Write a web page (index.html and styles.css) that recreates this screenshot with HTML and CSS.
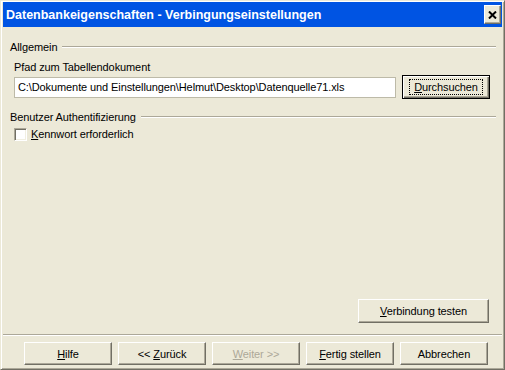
FILE: index.html
```html
<!DOCTYPE html>
<html lang="de">
<head>
    <meta charset="UTF-8">
    <title>Datenbankeigenschaften - Verbingungseinstellungen</title>
    <link rel="stylesheet" href="styles.css">
</head>
<body>
    <div class="window">
        <div class="titlebar">
            <span class="title">Datenbankeigenschaften - Verbingungseinstellungen</span>
            <div class="close-btn">
                <svg width="9" height="8" viewBox="0 0 9 8">
                    <path d="M1 0.5 L8 7.5 M8 0.5 L1 7.5" stroke="#000" stroke-width="2" fill="none"/>
                </svg>
            </div>
        </div>

        <div class="content">
            <div class="group-title">
                <span>Allgemein</span>
                <div class="rule"></div>
            </div>
            <div class="field-label">Pfad zum Tabellendokument</div>
            <div class="path-row">
                <div class="textbox">C:\Dokumente und Einstellungen\Helmut\Desktop\Datenquelle71.xls</div>
                <div class="btn btn-default"><span class="focus"><u>D</u>urchsuchen</span></div>
            </div>

            <div class="group-title second">
                <span>Benutzer Authentifizierung</span>
                <div class="rule"></div>
            </div>
            <div class="check-row">
                <div class="checkbox"></div>
                <span><u>K</u>ennwort erforderlich</span>
            </div>

            <div class="spacer"></div>

            <div class="test-row">
                <div class="btn btn-test"><span><u>V</u>erbindung testen</span></div>
            </div>
        </div>

        <div class="separator"></div>

        <div class="button-bar">
            <div class="btn"><span><u>H</u>ilfe</span></div>
            <div class="btn"><span>&lt;&lt; <u>Z</u>urück</span></div>
            <div class="btn disabled"><span><u>W</u>eiter &gt;&gt;</span></div>
            <div class="btn"><span><u>F</u>ertig stellen</span></div>
            <div class="btn"><span>Abbrechen</span></div>
        </div>
    </div>
</body>
</html>
```

FILE: styles.css
```css
body {
    margin: 0;
    font-family: 'Liberation Sans', Arial, sans-serif;
    font-size: 11px;
    letter-spacing: -0.1px;
    color: #000;
    background-color: #ece9d8;
}
.window {
    width: 505px;
    height: 370px;
    box-sizing: border-box;
    border: 1px solid;
    border-color: #ece9d8 #716f64 #716f64 #ece9d8;
    box-shadow: inset 1px 1px #fff, inset -1px -1px #aca899;
    padding: 1px 2px 2px 2px;
    background-color: #ece9d8;
    display: flex;
    flex-direction: column;
}
.titlebar {
    height: 25px;
    background-color: #0054e3;
    color: #fff;
    display: flex;
    align-items: center;
    justify-content: space-between;
    padding-left: 3px;
    padding-right: 1px;
    flex-shrink: 0;
}
.title {
    font-weight: bold;
    font-size: 12.5px;
    letter-spacing: 0;
}
.close-btn {
    width: 15px;
    height: 17px;
    background-color: #ece9d8;
    border: 1px solid;
    border-color: #fff #716f64 #716f64 #fff;
    box-shadow: inset -1px -1px #aca899;
    display: flex;
    align-items: center;
    justify-content: center;
}
.content {
    flex: 1;
    display: flex;
    flex-direction: column;
    padding: 13px 6px 0 7px;
}
.group-title {
    display: flex;
    align-items: center;
    height: 14px;
}
.group-title span {
    margin-right: 5px;
}
.group-title.second {
    margin-top: 11px;
}
.rule {
    flex: 1;
    height: 1px;
    background-color: #aca899;
    border-bottom: 1px solid #fff;
}
.field-label {
    margin-top: 6px;
    margin-left: 4px;
    height: 14px;
    line-height: 14px;
}
.path-row {
    display: flex;
    align-items: center;
    margin-top: 1px;
    margin-left: 4px;
    gap: 6px;
}
.textbox {
    width: 382px;
    height: 21px;
    box-sizing: border-box;
    background-color: #fff;
    border: 1px solid #bdbaa8;
    padding: 0 3px;
    line-height: 19px;
    white-space: nowrap;
    overflow: hidden;
}
.btn {
    width: 88px;
    height: 23px;
    box-sizing: border-box;
    background-color: #ece9d8;
    border: 1px solid;
    border-color: #fff #716f64 #716f64 #fff;
    box-shadow: inset -1px -1px #aca899;
    display: flex;
    align-items: center;
    justify-content: center;
    white-space: nowrap;
}
.btn-default {
    height: 24px;
    border: 1px solid #000;
    box-shadow: inset 1px 1px #fff, inset -1px -1px #716f64, inset -2px -2px #aca899;
}
.focus {
    border: 1px dotted #000;
    padding: 0 4px;
    line-height: 14px;
}
.check-row {
    display: flex;
    align-items: center;
    margin-top: 3px;
    margin-left: 4px;
    height: 14px;
}
.checkbox {
    width: 13px;
    height: 13px;
    box-sizing: border-box;
    background-color: #fff;
    border: 1px solid;
    border-color: #aca899 #fff #fff #aca899;
    box-shadow: inset 1px 1px #716f64, inset -1px -1px #f1efe2;
    margin-right: 4px;
}
.spacer {
    flex: 1;
}
.test-row {
    display: flex;
    justify-content: flex-end;
    padding-right: 7px;
    margin-bottom: 11px;
}
.btn-test {
    width: 131px;
    height: 24px;
}
.separator {
    height: 1px;
    background-color: #aca899;
    border-bottom: 1px solid #fff;
    flex-shrink: 0;
}
.button-bar {
    display: flex;
    gap: 6px;
    padding: 6px 0 0 21px;
    height: 31px;
    box-sizing: border-box;
    flex-shrink: 0;
}
.btn.disabled {
    color: #aca899;
}
```
